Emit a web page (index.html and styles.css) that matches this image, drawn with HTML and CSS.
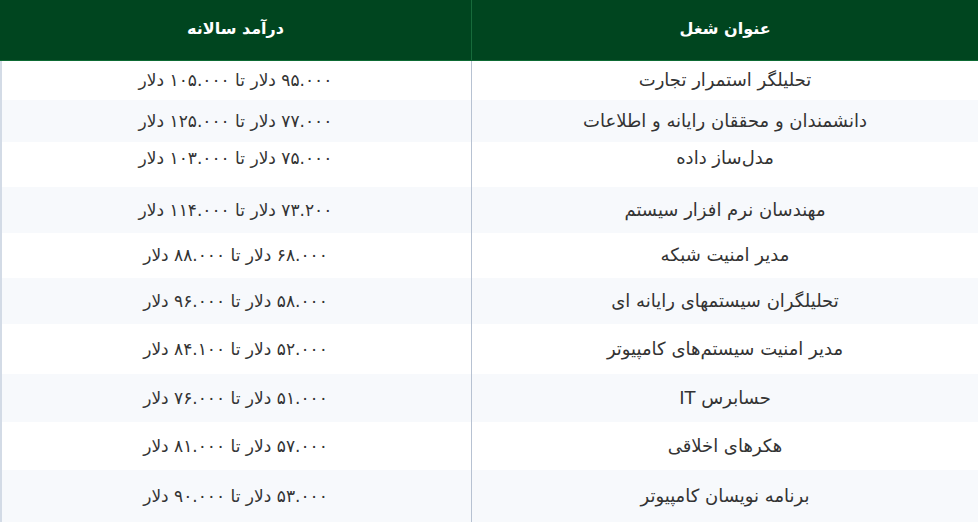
FILE: index.html
```html
<!DOCTYPE html>
<html lang="fa" dir="rtl">
<head>
<meta charset="utf-8">
<link rel="stylesheet" href="styles.css">
</head>
<body>
<table class="jobs">
  <thead>
    <tr><th class="col-title">عنوان شغل</th><th class="col-pay">درآمد سالانه</th></tr>
  </thead>
  <tbody>
    <tr><td>تحلیلگر استمرار تجارت</td><td>۹۵.۰۰۰ دلار تا ۱۰۵.۰۰۰ دلار</td></tr>
    <tr><td>دانشمندان و محققان رایانه و اطلاعات</td><td>۷۷.۰۰۰ دلار تا ۱۲۵.۰۰۰ دلار</td></tr>
    <tr><td>مدل‌ساز داده</td><td>۷۵.۰۰۰ دلار تا ۱۰۳.۰۰۰ دلار</td></tr>
    <tr><td>مهندسان نرم افزار سیستم</td><td>۷۳.۲۰۰ دلار تا ۱۱۴.۰۰۰ دلار</td></tr>
    <tr><td>مدیر امنیت شبکه</td><td>۶۸.۰۰۰ دلار تا ۸۸.۰۰۰ دلار</td></tr>
    <tr><td>تحلیلگران سیستمهای رایانه ای</td><td>۵۸.۰۰۰ دلار تا ۹۶.۰۰۰ دلار</td></tr>
    <tr><td>مدیر امنیت سیستم‌های کامپیوتر</td><td>۵۲.۰۰۰ دلار تا ۸۴.۱۰۰ دلار</td></tr>
    <tr><td>حسابرس IT</td><td>۵۱.۰۰۰ دلار تا ۷۶.۰۰۰ دلار</td></tr>
    <tr><td>هکرهای اخلاقی</td><td>۵۷.۰۰۰ دلار تا ۸۱.۰۰۰ دلار</td></tr>
    <tr><td>برنامه نویسان کامپیوتر</td><td>۵۳.۰۰۰ دلار تا ۹۰.۰۰۰ دلار</td></tr>
  </tbody>
</table>
</body>
</html>
```
FILE: styles.css
```css
html, body {
  margin: 0;
  padding: 0;
  background: #ffffff;
}
body {
  font-family: "DejaVu Sans", sans-serif;
  color: #333333;
}
.jobs {
  width: 978px;
  border-collapse: collapse;
  table-layout: fixed;
  direction: rtl;
}
.jobs th {
  background: #00451f;
  color: #ffffff;
  font-weight: bold;
  font-size: 16px;
  height: 56px;
  padding: 0 0 4px 0;
  border-bottom: 1px solid #0d6a34;
  text-align: center;
  vertical-align: middle;
}
.jobs th.col-title {
  width: 506px;
  border-left: 1px solid #176b3b;
}
.jobs td {
  font-size: 17px;
  text-align: center;
  vertical-align: middle;
  padding: 0;
  line-height: 24px;
}
.jobs td:first-child {
  font-size: 18px;
  border-left: 1px solid #b7c2d2;
}
.jobs td:last-child {
  box-shadow: inset 2px 0 0 #d3dbe6;
}
.jobs tbody tr:nth-child(even) td {
  background: #f7f9fc;
}
.jobs tbody tr:nth-child(1) { height: 39px; }
.jobs tbody tr:nth-child(2) { height: 42px; }
.jobs tbody tr:nth-child(3) { height: 45px; }
.jobs tbody tr:nth-child(3) td { padding-bottom: 12px; }
.jobs tbody tr:nth-child(4) { height: 46px; }
.jobs tbody tr:nth-child(5) { height: 45px; }
.jobs tbody tr:nth-child(6) { height: 46px; }
.jobs tbody tr:nth-child(7) { height: 50px; }
.jobs tbody tr:nth-child(8) { height: 48px; }
.jobs tbody tr:nth-child(9) { height: 48px; }
.jobs tbody tr:nth-child(10) { height: 52px; }
```
